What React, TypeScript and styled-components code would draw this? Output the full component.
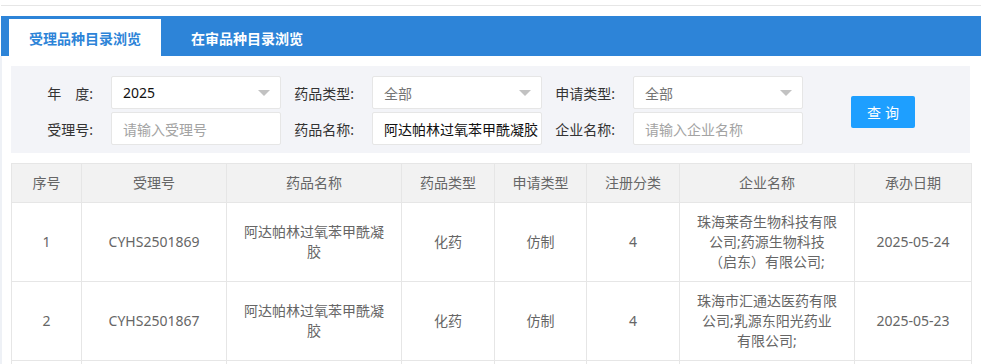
import React from "react";
import styled, { createGlobalStyle } from "styled-components";

const GlobalStyle = createGlobalStyle`
  html, body { margin: 0; padding: 0; background: #fff; }
  body {
    font-family: "Noto Sans", "Noto Sans CJK SC", sans-serif;
    font-size: 14px;
    color: #333;
  }
  * { box-sizing: border-box; }
`;

const Page = styled.div`
  display: flex;
  flex-direction: column;
  width: 981px;
`;

const TopLine = styled.div`
  height: 1px;
  margin: 5px 0 0 1px;
  background: #e6e6e6;
`;

const TabBar = styled.div`
  display: flex;
  gap: 10px;
  height: 40px;
  margin: 10px 0 0 1px;
  padding: 3px 0 0 8px;
  background: #2d84d8;
`;

const Tab = styled.div<{ $active?: boolean }>`
  width: 152px;
  height: 37px;
  display: flex;
  align-items: center;
  justify-content: center;
  font-size: 14px;
  font-weight: 700;
  color: ${(p) => (p.$active ? "#2d84d8" : "#fff")};
  background: ${(p) => (p.$active ? "#fff" : "transparent")};
`;

const Content = styled.div`
  border-left: 2px solid #eef1f6;
  padding: 10px 11px 0 9px;
`;

const FilterPanel = styled.div`
  display: flex;
  align-items: center;
  background: #f3f4f8;
  padding: 10px 0 8px 9px;
  height: 87px;
`;

const FormGrid = styled.div`
  display: grid;
  grid-template-columns: repeat(3, 91px 170px);
  grid-auto-rows: 33px;
  row-gap: 3px;
`;

const Label = styled.label`
  display: flex;
  align-items: center;
  justify-content: flex-end;
  padding-right: 18px;
  color: #333;
  font-size: 14px;
  white-space: nowrap;
`;

const Field = styled.div<{ $tone?: "value" | "muted" | "placeholder" }>`
  display: flex;
  align-items: center;
  justify-content: space-between;
  height: 33px;
  padding: 0 10px 0 11px;
  background: #fff;
  border: 1px solid #e6e6e6;
  border-radius: 2px;
  font-size: 14px;
  white-space: nowrap;
  overflow: hidden;
  color: ${(p) =>
    p.$tone === "placeholder" ? "#a3a3a3" : p.$tone === "muted" ? "#757575" : "#111"};
`;

const Arrow = styled.span`
  width: 0;
  height: 0;
  border-top: 6px solid #c2c2c2;
  border-left: 6px solid transparent;
  border-right: 6px solid transparent;
  margin-top: 1px;
`;

const SearchButton = styled.button`
  margin: 3px 0 0 48px;
  width: 64px;
  height: 32px;
  border: none;
  border-radius: 2px;
  background: #1e9fff;
  color: #fff;
  font-family: inherit;
  font-size: 14px;
  letter-spacing: 4px;
  padding: 0 0 0 4px;
  cursor: pointer;
`;

const Table = styled.table`
  margin-top: 10px;
  width: 960px;
  border-collapse: collapse;
  table-layout: fixed;
  border: 1px solid #e6e6e6;
`;

const Th = styled.th`
  background: #f2f2f2;
  border: 1px solid #e6e6e6;
  padding: 9px 15px;
  line-height: 20px;
  font-weight: 400;
  font-size: 14px;
  color: #666;
  text-align: center;
`;

const Td = styled.td`
  border: 1px solid #e6e6e6;
  padding: 9px 16px;
  line-height: 20px;
  font-size: 14px;
  color: #666;
  text-align: center;
  height: 79px;
`;

const fields = [
  { label: "年　度:", value: "2025", tone: "value" as const, select: true },
  { label: "药品类型:", value: "全部", tone: "muted" as const, select: true },
  { label: "申请类型:", value: "全部", tone: "muted" as const, select: true },
  { label: "受理号:", value: "请输入受理号", tone: "placeholder" as const, select: false },
  { label: "药品名称:", value: "阿达帕林过氧苯甲酰凝胶", tone: "value" as const, select: false },
  { label: "企业名称:", value: "请输入企业名称", tone: "placeholder" as const, select: false },
];

const columns = [
  { title: "序号", width: 70 },
  { title: "受理号", width: 145 },
  { title: "药品名称", width: 175 },
  { title: "药品类型", width: 93 },
  { title: "申请类型", width: 92 },
  { title: "注册分类", width: 93 },
  { title: "企业名称", width: 175 },
  { title: "承办日期", width: 117 },
];

const rows = [
  ["1", "CYHS2501869", "阿达帕林过氧苯甲酰凝胶", "化药", "仿制", "4", "珠海莱奇生物科技有限公司;药源生物科技（启东）有限公司;", "2025-05-24"],
  ["2", "CYHS2501867", "阿达帕林过氧苯甲酰凝胶", "化药", "仿制", "4", "珠海市汇通达医药有限公司;乳源东阳光药业有限公司;", "2025-05-23"],
  ["", "", "", "", "", "", "", ""],
];

export default function App() {
  return (
    <Page>
      <GlobalStyle />
      <TopLine />
      <TabBar>
        <Tab $active>受理品种目录浏览</Tab>
        <Tab>在审品种目录浏览</Tab>
      </TabBar>
      <Content>
        <FilterPanel>
          <FormGrid>
            {fields.map((f) => (
              <React.Fragment key={f.label}>
                <Label>{f.label}</Label>
                <Field $tone={f.tone}>
                  <span>{f.value}</span>
                  {f.select && <Arrow />}
                </Field>
              </React.Fragment>
            ))}
          </FormGrid>
          <SearchButton>查询</SearchButton>
        </FilterPanel>
        <Table>
          <colgroup>
            {columns.map((c) => (
              <col key={c.title} style={{ width: c.width }} />
            ))}
          </colgroup>
          <thead>
            <tr>
              {columns.map((c) => (
                <Th key={c.title}>{c.title}</Th>
              ))}
            </tr>
          </thead>
          <tbody>
            {rows.map((r, ri) => (
              <tr key={ri}>
                {r.map((cell, i) => (
                  <Td key={i}>{cell}</Td>
                ))}
              </tr>
            ))}
          </tbody>
        </Table>
      </Content>
    </Page>
  );
}
